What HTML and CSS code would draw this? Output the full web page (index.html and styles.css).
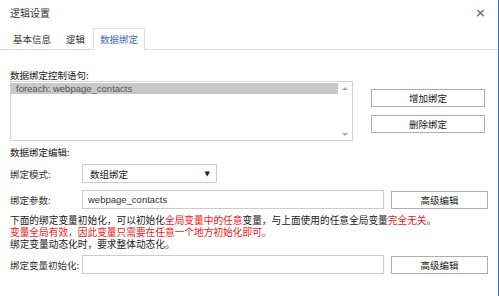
FILE: index.html
```html
<!DOCTYPE html>
<html lang="zh-CN">
<head>
    <meta charset="UTF-8">
    <title>逻辑设置</title>
    <link rel="stylesheet" href="styles.css">
</head>
<body>
    <div class="dialog">
        <div class="header">
            <span class="title">逻辑设置</span>
            <span class="close">&times;</span>
        </div>
        <ul class="tabs">
            <li>基本信息</li>
            <li>逻辑</li>
            <li class="active">数据绑定</li>
        </ul>
        <div class="content">
            <div class="caption">数据绑定控制语句:</div>
            <div class="bind-row">
                <div class="listbox">
                    <div class="list-items">
                        <div class="item selected">foreach: webpage_contacts</div>
                    </div>
                    <div class="scroll">
                        <span class="arrow up"></span>
                        <span class="arrow down"></span>
                    </div>
                </div>
                <div class="side-buttons">
                    <button class="btn">增加绑定</button>
                    <button class="btn">删除绑定</button>
                </div>
            </div>

            <div class="caption edit-caption">数据绑定编辑:</div>
            <div class="field mode-row">
                <label>绑定模式:</label>
                <div class="select">
                    <span>数组绑定</span>
                    <span class="caret">&#9660;</span>
                </div>
            </div>
            <div class="field param-row">
                <label>绑定参数:</label>
                <div class="input">webpage_contacts</div>
                <button class="btn wide">高级编辑</button>
            </div>

            <div class="notes">
                <p>下面的绑定变量初始化，可以初始化<span class="red">全局变量中的任意</span>变量，与上面使用的任意全局变量<span class="red">完全无关</span>。</p>
                <p class="red">变量全局有效，因此变量只需要在任意一个地方初始化即可。</p>
                <p>绑定变量动态化时，要求整体动态化。</p>
            </div>

            <div class="field init-row">
                <label>绑定变量初始化:</label>
                <div class="input"></div>
                <button class="btn wide">高级编辑</button>
            </div>
        </div>
    </div>
</body>
</html>
```

FILE: styles.css
```css
html, body {
    margin: 0;
    padding: 0;
    background: #fff;
}

body {
    font-family: "Noto Sans CJK SC", "Noto Sans", sans-serif;
    font-size: 9.5px;
    color: #222;
}

.dialog {
    width: 498px;
    height: 296px;
    border-right: 1px solid #3b78c6;
    overflow: hidden;
}

.header {
    display: flex;
    justify-content: space-between;
    align-items: center;
    height: 25px;
    padding: 0 12px 2px 10px;
}

.title {
    font-size: 10px;
    color: #333;
}

.close {
    font-family: "DejaVu Sans", sans-serif;
    font-size: 13px;
    font-weight: bold;
    color: #777;
}

.tabs {
    list-style: none;
    margin: 0;
    padding: 1px 0 0 6px;
    display: flex;
    border-bottom: 1px solid #ddd;
    height: 21px;
}

.tabs li {
    padding: 0 6px;
    line-height: 20px;
    font-size: 9.5px;
    color: #333;
    border: 1px solid transparent;
    border-bottom: none;
    margin-right: 1px;
}

.tabs li.active {
    border-color: #ddd;
    background: #fff;
    color: #3a6fb0;
    margin-bottom: -1px;
    height: 21px;
}

.content {
    padding: 19px 0 0 10px;
}

.caption {
    line-height: 12px;
    color: #222;
}

.bind-row {
    display: flex;
    align-items: flex-start;
}

.listbox {
    width: 341px;
    height: 58px;
    border: 1px solid #d4d4d4;
    display: flex;
}

.list-items {
    flex: 1;
    padding-top: 1px;
}

.item {
    font-family: "Liberation Sans", sans-serif;
    font-size: 9.5px;
    color: #555;
    line-height: 11px;
    padding-left: 5px;
}

.item.selected {
    background: #c8c8c8;
}

.scroll {
    width: 14px;
    display: flex;
    flex-direction: column;
    justify-content: space-between;
    align-items: center;
    padding: 5px 0 4px;
}

.arrow {
    width: 0;
    height: 0;
    border-left: 3px solid transparent;
    border-right: 3px solid transparent;
}

.arrow.up {
    border-bottom: 3px solid #aaa;
}

.arrow.down {
    border-top: 3px solid #aaa;
}

.side-buttons {
    display: flex;
    flex-direction: column;
    gap: 8px;
    margin: 8px 0 0 18px;
}

.btn {
    font-family: inherit;
    font-size: 9.5px;
    color: #222;
    background: #fff;
    border: 1px solid #adadad;
    width: 114px;
    height: 18px;
    padding: 0;
    line-height: 16px;
}

.btn.wide {
    width: 97px;
    margin-left: 7px;
}

.edit-caption {
    margin-top: 5px;
}

.field {
    display: flex;
    align-items: center;
}

.field label {
    width: 72px;
    color: #333;
}

.mode-row {
    margin-top: 6px;
}

.select {
    width: 120px;
    height: 17px;
    border: 1px solid #ccc;
    display: flex;
    justify-content: space-between;
    align-items: center;
    padding: 0 6px 0 7px;
    font-size: 9.5px;
}

.caret {
    font-family: "DejaVu Sans", sans-serif;
    font-size: 7px;
    color: #222;
}

.param-row {
    margin-top: 7px;
}

.input {
    width: 295px;
    height: 17px;
    border: 1px solid #ccc;
    padding-left: 5px;
    font-family: "Liberation Sans", sans-serif;
    font-size: 9.5px;
    line-height: 17px;
    color: #333;
}

.notes {
    margin-top: 5px;
    font-size: 9.7px;
}

.notes p {
    margin: 0;
    line-height: 12px;
}

.red {
    color: #f01818;
}

.init-row {
    margin-top: 5px;
}
```
